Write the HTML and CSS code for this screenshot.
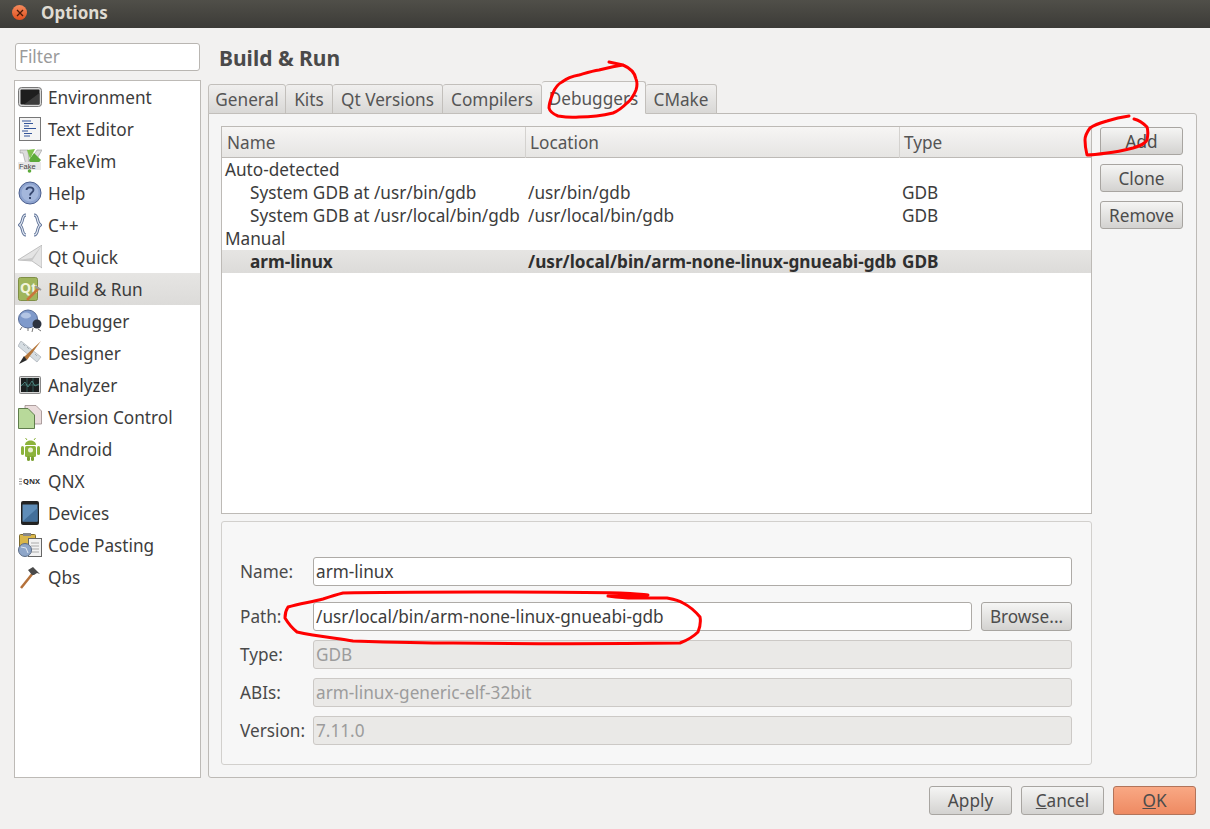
FILE: index.html
```html
<!DOCTYPE html>
<html lang="en">
  <head>
    <meta charset="UTF-8" />
    <link rel="stylesheet" href="styles.css">
    <title>Options</title>
  </head>
  <body>
    <header class="titlebar">
      <span class="close-btn">
        <svg width="8" height="8" viewBox="0 0 8 8"><path d="M1 1L7 7M7 1L1 7" stroke="#4a1a08" stroke-width="1.3"/></svg>
      </span>
      <span class="title">Options</span>
    </header>

    <div class="window">
      <aside class="side">
        <div class="filter">Filter</div>
        <ul class="cats">
          <li class="cat">
            <svg class="ico" viewBox="0 0 24 24"><rect x="0.500" y="2.500" width="23" height="19" rx="3" fill="#d8d8d8" stroke="#777"/><rect x="2.500" y="4.500" width="19" height="15" rx="1" fill="#1e1e1e"/><path d="M6 19.500L21.500 19.500L21.500 8Z" fill="#3c3c3c"/></svg>
            Environment
          </li>
          <li class="cat">
            <svg class="ico" viewBox="0 0 24 24"><rect x="1.500" y="0.500" width="21" height="23" fill="#f4f4f4" stroke="#777"/><path d="M4 4H13M6 6.500H15M6 9H11M6 11.500H18M4 14H10M6 16.500H14M6 19H12" stroke="#34559a" stroke-width="1.200"/></svg>
            Text Editor
          </li>
          <li class="cat">
            <svg class="ico" viewBox="0 0 24 24"><path d="M2 1H10L11 13L19 1H24L13 20H9L5 4H2Z" fill="#dcdcdc" stroke="#999" stroke-width=".6"/><path d="M9 1L17 0L12 10Z" fill="#7cc04a"/><path d="M16 4L23 11L16 19L11 11Z" fill="#5caa3a"/><rect x="0" y="13" width="23" height="8" fill="#e8e8e8"/><text class="fake" x="1" y="20">Fake</text><circle cx="11.500" cy="22" r="1.800" fill="#5caa3a"/></svg>
            FakeVim
          </li>
          <li class="cat">
            <svg class="ico" viewBox="0 0 24 24"><circle cx="12" cy="12" r="11" fill="#8da3cf" stroke="#4c5f8e"/><circle cx="12" cy="12" r="8.500" fill="#a4b7dc"/><path d="M8.500 9C8.500 5.500 15.500 5.500 15.500 9C15.500 11.500 12 11.500 12 14.500" fill="none" stroke="#36476f" stroke-width="1.800"/><rect x="11" y="16" width="2" height="2" fill="#36476f"/></svg>
            Help
          </li>
          <li class="cat">
            <svg class="ico" viewBox="0 0 24 24"><path d="M8 2C3 2 6 10 1.500 12C6 14 3 22 8 22M16 2C21 2 18 10 22.500 12C18 14 21 22 16 22" fill="none" stroke="#5a6e94" stroke-width="3"/><path d="M8 2C3 2 6 10 1.500 12C6 14 3 22 8 22M16 2C21 2 18 10 22.500 12C18 14 21 22 16 22" fill="none" stroke="#e4eaf4" stroke-width="1.200"/></svg>
            C++
          </li>
          <li class="cat">
            <svg class="ico" viewBox="0 0 24 24"><path d="M0 15L24 0V23L14 16Z" fill="#e4e4e4" stroke="#aaa" stroke-width=".7"/><path d="M0 15L14 13L24 0L14 16Z" fill="#c8c8c8"/></svg>
            Qt Quick
          </li>
          <li class="cat cat-on">
            <svg class="ico" viewBox="0 0 24 24"><rect x="0.500" y="0.500" width="19" height="23" rx="2" fill="#a0b55c" stroke="#7f8f45"/><text class="qt" x="2" y="16">Qt</text><path d="M9 23L21 11" stroke="#c8763c" stroke-width="2.500"/><path d="M17 9L23 13" stroke="#999" stroke-width="2"/></svg>
            Build &amp; Run
          </li>
          <li class="cat">
            <svg class="ico" viewBox="0 0 24 24"><ellipse cx="10" cy="10" rx="9.500" ry="9" fill="#7f9acb" stroke="#566b96"/><ellipse cx="8" cy="6.500" rx="5" ry="3" fill="#b3c5e4"/><circle cx="19" cy="15" r="4.500" fill="#2c3340"/><path d="M4 18L2 21M10 19V22M15 19L14 23M20 20L23 22" stroke="#666" stroke-width=".9"/></svg>
            Debugger
          </li>
          <li class="cat">
            <svg class="ico" viewBox="0 0 24 24"><path d="M3 0L23 16L19 21L0 5Z" fill="#d6dde2" stroke="#a6aeb5" stroke-width=".7"/><path d="M5 3L7 5M9 6L11 8M13 10L15 12M17 13L19 15" stroke="#98a2aa" stroke-width=".8"/><path d="M23 0L6 16L9 19Z" fill="#b5763a"/><path d="M6 15L1 23L9 19Z" fill="#2b2b2b"/></svg>
            Designer
          </li>
          <li class="cat">
            <svg class="ico" viewBox="0 0 24 24"><rect x="1.500" y="3.500" width="21" height="17" rx="1" fill="#d4d4d4" stroke="#888"/><rect x="3" y="5" width="18" height="14" fill="#1b1f20"/><path d="M3 12H21M9 5V19M15 5V19" stroke="#3d6f6c" stroke-width=".7"/><path d="M3 13L7 9L10 14L14 8L17 13L21 11" fill="none" stroke="#58a09a" stroke-width=".7"/></svg>
            Analyzer
          </li>
          <li class="cat">
            <svg class="ico" viewBox="0 0 24 24"><path d="M7 0.500H18L23.500 6V19H7Z" fill="#eadcdc" stroke="#9a8a8a" stroke-width=".8"/><path d="M0.500 3.500H10L16.500 10V23.500H0.500Z" fill="#b8d99a" stroke="#5f7d4c"/></svg>
            Version Control
          </li>
          <li class="cat">
            <svg class="ico" viewBox="0 0 24 24"><path d="M7 8C7 2 18 2 18 8Z" fill="#8cb33b"/><path d="M9 3L7.500 1M16 3L17.500 1" stroke="#8cb33b"/><rect x="7" y="9" width="11" height="11" rx="1.500" fill="#8cb33b"/><rect x="3" y="9" width="3" height="9" rx="1.500" fill="#8cb33b"/><rect x="19" y="9" width="3" height="9" rx="1.500" fill="#8cb33b"/><rect x="9" y="19" width="3" height="5" rx="1.500" fill="#7ba030"/><rect x="13" y="19" width="3" height="5" rx="1.500" fill="#7ba030"/><circle cx="12.500" cy="13" r="2.500" fill="#e8efd2"/></svg>
            Android
          </li>
          <li class="cat">
            <svg class="ico" viewBox="0 0 24 24"><path d="M1 10H4M1 12.500H4M1 15H4" stroke="#777" stroke-width=".8"/><text class="qnx" x="5" y="15">QNX</text></svg>
            QNX
          </li>
          <li class="cat">
            <svg class="ico" viewBox="0 0 24 24"><rect x="3" y="0" width="18" height="24" rx="2" fill="#222"/><rect x="4.500" y="3.500" width="15" height="17" fill="#5f8db8"/><path d="M4.500 20.500L19.500 7V20.500Z" fill="#436f9a"/></svg>
            Devices
          </li>
          <li class="cat">
            <svg class="ico" viewBox="0 0 24 24"><rect x="1.500" y="1.500" width="16" height="18" rx="1" fill="#d9b64a" stroke="#7d6a2c"/><rect x="5" y="0" width="8" height="3" fill="#888"/><rect x="10.500" y="5.500" width="13" height="18" fill="#f2f2f2" stroke="#666"/><path d="M13 10H21M13 13H21M13 16H21M13 19H21" stroke="#aaa"/><circle cx="7" cy="17" r="6.500" fill="#8ea6c9" stroke="#5a6b85"/><path d="M3 14L8 15L10 20" stroke="#dce6f2" fill="none"/></svg>
            Code Pasting
          </li>
          <li class="cat">
            <svg class="ico" viewBox="0 0 24 24"><path d="M3 23L15 8" stroke="#b5713a" stroke-width="2.500"/><path d="M10 5L15 2L22 9L19 8L16 10L14 10Z" fill="#4a4a4a"/></svg>
            Qbs
          </li>
        </ul>
      </aside>

      <main class="main">
        <h1 class="page-title">Build &amp; Run</h1>
        <nav class="tabs">
          <span class="tab tab-general">General</span>
          <span class="tab tab-kits">Kits</span>
          <span class="tab tab-qt">Qt Versions</span>
          <span class="tab tab-comp">Compilers</span>
          <span class="tab tab-on">Debuggers</span>
          <span class="tab tab-cmake">CMake</span>
        </nav>

        <section class="pane">
          <div class="pane-left">
            <div class="tree">
              <div class="row head">
                <span>Name</span><span>Location</span><span>Type</span>
              </div>
              <div class="row"><span>Auto-detected</span></div>
              <div class="row"><span class="kid">System GDB at /usr/bin/gdb</span><span>/usr/bin/gdb</span><span>GDB</span></div>
              <div class="row"><span class="kid">System GDB at /usr/local/bin/gdb</span><span>/usr/local/bin/gdb</span><span>GDB</span></div>
              <div class="row"><span>Manual</span></div>
              <div class="row row-on"><span class="kid">arm-linux</span><span>/usr/local/bin/arm-none-linux-gnueabi-gdb</span><span>GDB</span></div>
            </div>

            <div class="details">
              <div class="field field-name">
                <label>Name:</label>
                <div class="input">arm-linux</div>
              </div>
              <div class="field">
                <label>Path:</label>
                <div class="input">/usr/local/bin/arm-none-linux-gnueabi-gdb</div>
                <button class="btn btn-browse">Browse...</button>
              </div>
              <div class="field">
                <label>Type:</label>
                <div class="input input-off">GDB</div>
              </div>
              <div class="field">
                <label>ABIs:</label>
                <div class="input input-off">arm-linux-generic-elf-32bit</div>
              </div>
              <div class="field">
                <label>Version:</label>
                <div class="input input-off">7.11.0</div>
              </div>
            </div>
          </div>

          <div class="pane-right">
            <button class="btn btn-side">Add</button>
            <button class="btn btn-side">Clone</button>
            <button class="btn btn-side">Remove</button>
          </div>
        </section>

        <footer class="actions">
          <button class="btn">Apply</button>
          <button class="btn"><u>C</u>ancel</button>
          <button class="btn btn-ok"><u>O</u>K</button>
        </footer>
      </main>
    </div>

    <!-- red marks drawn on top of the screenshot -->
    <svg class="marks" width="1210" height="829" viewBox="0 0 1210 829">
      <path d="M609 62L623 65C630 68 635 73 636 79C638 84 637 87 636 90C634 95 631 100 627 103C622 108 618 111 613 113C601 116 590 117 579 117C571 118 564 117 558 116C553 114 550 112 549 108C549 103 551 98 553 93C555 88 558 84 562 82C567 78 573 76 579 75C586 73 592 71 599 70C607 68 615 66 623 65"/>
      <path d="M1129 116C1121 117 1113 119 1107 121C1100 123 1094 125 1090 128C1087 132 1085 136 1085 140C1085 145 1086 151 1087 155C1093 155 1100 154 1107 153C1116 152 1125 150 1133 148C1140 146 1145 144 1147 140C1148 135 1148 130 1147 127C1143 123 1139 120 1134 119"/>
      <path d="M608 596C622 596 636 596 648 595C638 594 630 593 620 593C570 592 520 592 477 592C430 592 385 592 343 593C335 595 329 597 323 599C311 602 298 604 288 607C286 610 285 614 285 618C288 623 292 628 297 632C315 636 334 638 353 641C385 642 420 643 453 643C530 644 610 644 680 643C688 640 694 636 698 632C700 627 701 622 700 617C695 611 689 606 683 603C678 600 672 599 667 598C656 598 645 598 633 598C625 598 616 597 608 596"/>
    </svg>
  </body>
</html>
```

FILE: styles.css
```css
* {
  box-sizing: border-box;
}

body {
  margin: 0;
  width: 1210px;
  height: 829px;
  overflow: hidden;
  background-color: #f2f1f0;
  font-family: "Noto Sans", sans-serif;
  font-size: 17.2px;
  color: #3c3c3c;
}

.titlebar {
  height: 28px;
  display: flex;
  align-items: center;
  padding: 0 0 3px 12px;
  background: linear-gradient(#504f49, #3c3b37);
}

.close-btn {
  width: 15px;
  height: 15px;
  border-radius: 50%;
  display: flex;
  align-items: center;
  justify-content: center;
  background: linear-gradient(#f48a5c, #e2501f);
}

.title {
  margin-left: 14px;
  font-weight: bold;
  font-size: 17px;
  color: #dfdbd2;
}

.window {
  display: flex;
  height: 801px;
  padding: 15px 13px 0 15px;
}

.side {
  width: 186px;
  margin-right: 7px;
  flex-shrink: 0;
}

.filter {
  width: 185px;
  height: 28px;
  padding: 0 3px;
  line-height: 26px;
  background-color: #fff;
  border: 1px solid #b9b6b2;
  border-radius: 3px;
  color: #9a9a9a;
}

.cats {
  list-style: none;
  margin: 9px 0 0 -1px;
  padding: 0;
  width: 187px;
  height: 698px;
  background-color: #fff;
  border: 1px solid #bdbab6;
}

.cat {
  height: 32px;
  display: flex;
  align-items: center;
  gap: 6px;
  padding-left: 3px;
}

.cat-on {
  background: linear-gradient(#e6e5e3, #dcdbd9);
}

.ico {
  width: 24px;
  height: 24px;
  flex-shrink: 0;
}

.fake {
  font-size: 7.5px;
  font-family: "Liberation Sans", sans-serif;
  fill: #444;
}

.qt {
  font-size: 14px;
  font-weight: bold;
  fill: #f2f4dc;
}

.qnx {
  font-size: 7.5px;
  font-weight: bold;
  fill: #333;
}

.main {
  flex: 1;
  min-width: 0;
}

.page-title {
  margin: 0;
  height: 38px;
  padding-left: 11px;
  font-size: 21px;
  line-height: 30px;
  font-weight: bold;
  color: #4a4a4a;
}

.tabs {
  display: flex;
  align-items: flex-end;
  height: 33px;
  margin-bottom: -1px;
  position: relative;
  z-index: 1;
}

.tab {
  height: 30px;
  display: flex;
  align-items: center;
  justify-content: center;
  background: linear-gradient(#f0efee, #d9d8d6);
  border: 1px solid #c2bfbb;
  border-left: none;
  border-radius: 3px 3px 0 0;
  color: #555;
}

.tab:first-child {
  border-left: 1px solid #c2bfbb;
}

.tab-general { width: 78px; }
.tab-kits { width: 47px; }
.tab-qt { width: 110px; }
.tab-comp { width: 99px; }
.tab-cmake { width: 71px; }

.tab-on {
  width: 104px;
  height: 33px;
  padding-top: 2px;
  background: #f5f5f5;
  border-bottom-color: #f5f5f5;
}

.pane {
  display: flex;
  height: 665px;
  padding: 12px 13px 11px 12px;
  background-color: #f5f5f5;
  border: 1px solid #bdbab6;
  border-radius: 0 3px 3px 3px;
}

.pane-left {
  width: 871px;
  display: flex;
  flex-direction: column;
  gap: 7px;
}

.pane-right {
  margin-left: 8px;
  display: flex;
  flex-direction: column;
  gap: 9px;
  padding-top: 1px;
}

.tree {
  height: 388px;
  background-color: #fff;
  border: 1px solid #bdbab6;
}

.row {
  display: grid;
  grid-template-columns: 303px 374px 1fr;
  height: 23px;
  line-height: 23px;
  white-space: nowrap;
}

.row span {
  padding-left: 3px;
}

.row .kid {
  padding-left: 28px;
}

.head {
  height: 31px;
  line-height: 31px;
  background: linear-gradient(#f6f5f4, #e6e5e3);
  border-bottom: 1px solid #bdbab6;
  color: #555;
}

.head span {
  padding-left: 5px;
}

.head span + span {
  padding-left: 4px;
  border-left: 1px solid #d4d2cf;
}

.row-on {
  background: linear-gradient(#e6e5e3, #dcdbd9);
  font-weight: bold;
  color: #2f2f2f;
}

.details {
  height: 244px;
  padding: 35px 19px 0 18px;
  display: flex;
  flex-direction: column;
  gap: 9px;
  background-color: #f7f7f7;
  border: 1px solid #d2d0cd;
  border-radius: 3px;
}

.field {
  display: flex;
  align-items: center;
  height: 29px;
}

.field-name {
  margin-bottom: 7px;
}

.field label {
  width: 73px;
  flex-shrink: 0;
  color: #4a4a4a;
}

.input {
  flex: 1;
  height: 29px;
  line-height: 27px;
  padding: 0 2px;
  background-color: #fff;
  border: 1px solid #aeaba7;
  border-radius: 3px;
  white-space: nowrap;
  color: #3c3c3c;
}

.input-off {
  background-color: #eae9e7;
  border-color: #ccc9c6;
  color: #9c9c9c;
}

.btn {
  width: 83px;
  height: 29px;
  padding: 0;
  font-family: inherit;
  font-size: 17.2px;
  color: #4c4c4c;
  background: linear-gradient(#f5f5f4, #d3d2d0);
  border: 1px solid #a8a5a1;
  border-radius: 3px;
}

.btn-side {
  height: 28px;
}

.btn-browse {
  width: 91px;
  margin-left: 9px;
}

.btn-ok {
  background: linear-gradient(#f9a884, #ee8a62);
  border-color: #b2745a;
}

.actions {
  display: flex;
  justify-content: flex-end;
  gap: 9px;
  margin-top: 8px;
  padding-right: 1px;
}

.marks {
  position: absolute;
  left: 0;
  top: 0;
  z-index: 2;
  pointer-events: none;
}

.marks path {
  fill: none;
  stroke: #f00;
  stroke-width: 3;
  stroke-linejoin: round;
  stroke-linecap: round;
}
```
